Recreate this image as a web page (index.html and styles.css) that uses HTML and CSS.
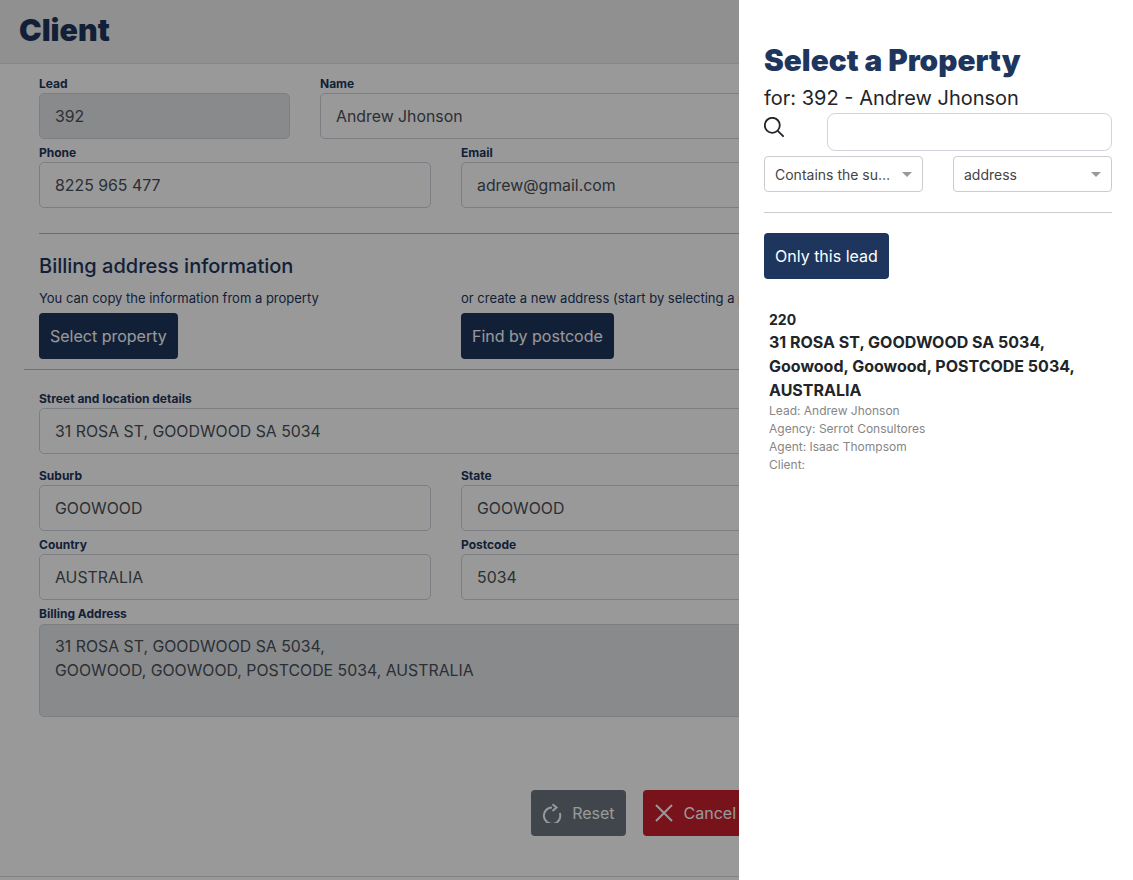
FILE: index.html
```html
<!DOCTYPE html>
<html lang="en">
<head>
<meta charset="UTF-8">
<title>Client</title>
<link rel="stylesheet" href="styles.css">
</head>
<body>
<div class="page">
    <header class="topbar"><h1 class="titolo">Client</h1></header>
    <form class="form">
        <div class="row row-lead">
            <div class="field"><label>Lead</label><input class="input" type="text" value="392" disabled></div>
            <div class="field"><label>Name</label><input class="input" type="text" value="Andrew Jhonson"></div>
        </div>
        <div class="row row-half">
            <div class="field"><label>Phone</label><input class="input" type="text" value="8225 965 477"></div>
            <div class="field"><label>Email</label><input class="input" type="text" value="adrew@gmail.com"></div>
        </div>
        <hr class="line">
        <h3 class="subtitle">Billing address information</h3>
        <div class="row row-half">
            <div>
                <p class="hint">You can copy the information from a property</p>
                <button type="button" class="btn btn-navy">Select property</button>
            </div>
            <div>
                <p class="hint nowrap">or create a new address (start by selecting a postcode)</p>
                <button type="button" class="btn btn-navy">Find by postcode</button>
            </div>
        </div>
        <hr class="line line-wide">
        <div class="field field-street"><label>Street and location details</label><input class="input" type="text" value="31 ROSA ST, GOODWOOD SA 5034"></div>
        <div class="row row-half">
            <div class="field"><label>Suburb</label><input class="input" type="text" value="GOOWOOD"></div>
            <div class="field"><label>State</label><input class="input" type="text" value="GOOWOOD"></div>
        </div>
        <div class="row row-half">
            <div class="field"><label>Country</label><input class="input" type="text" value="AUSTRALIA"></div>
            <div class="field"><label>Postcode</label><input class="input" type="text" value="5034"></div>
        </div>
        <div class="field field-billing"><label>Billing Address</label><textarea class="input area" disabled>31 ROSA ST, GOODWOOD SA 5034,
GOOWOOD, GOOWOOD, POSTCODE 5034, AUSTRALIA</textarea></div>
        <div class="actions">
            <button type="button" class="btn btn-grey">
                <svg class="ico" viewBox="0 0 20 20" fill="none" stroke="currentColor" stroke-width="2"><path d="M10 4.500A8.200 8.200 0 1 0 17.800 10"/><path d="M10.500 1.200L14.500 4.500L10.500 8"/></svg>
                Reset
            </button>
            <button type="button" class="btn btn-red">
                <svg class="ico" viewBox="0 0 20 20" fill="none" stroke="currentColor" stroke-width="2"><path d="M2 2l16 16M18 2L2 18"/></svg>
                Cancel
            </button>
        </div>
    </form>
    <div class="bottomline"></div>
</div>

<div class="overlay"></div>

<aside class="panel">
    <h2 class="panel-title">Select a Property</h2>
    <p class="panel-for">for: 392 - Andrew Jhonson</p>
    <div class="search">
        <svg class="search-ico" viewBox="0 0 20 20" fill="none" stroke="#212529" stroke-width="1.800"><circle cx="8.300" cy="8.300" r="7.500"/><path d="M13.800 13.800L19.700 19.700"/></svg>
        <input class="search-input" type="text">
    </div>
    <div class="filters">
        <div class="select"><span class="select-text">Contains the su…</span></div>
        <div class="select"><span class="select-text">address</span></div>
    </div>
    <hr class="panel-line">
    <button type="button" class="btn btn-navy">Only this lead</button>
    <div class="result">
        <div class="result-id">220</div>
        <div class="result-name">31 ROSA ST, GOODWOOD SA 5034, Goowood, Goowood, POSTCODE 5034, AUSTRALIA</div>
        <div class="result-info">Lead: Andrew Jhonson</div>
        <div class="result-info">Agency: Serrot Consultores</div>
        <div class="result-info">Agent: Isaac Thompsom</div>
        <div class="result-info">Client:</div>
    </div>
</aside>
</body>
</html>
```

FILE: styles.css
```css
html, body {margin: 0; height: 880px; overflow: hidden;}
body {font-family: Inter, "Liberation Sans", sans-serif; font-size: 16px; color: #212529; background: #FFFFFF;}
* {box-sizing: border-box;}

.page {width: 1133px; height: 880px; position: relative;}
.topbar {height: 64px; background: #F0F0F0; border-bottom: 1px solid #E2E2E2; padding: 9px 19px 0;}
.titolo {margin: 0; font-size: 30.300px; line-height: 42px; font-weight: 900; color: #1E365D;}

.form {width: 844px; margin-left: 24px; padding: 11px 15px 0;}
.row {display: grid; column-gap: 30px;}
.row-lead {grid-template-columns: 251px 503px; }
.row-half {grid-template-columns: 392px 392px;}
.field {margin-bottom: 5px;}
.field label {display: block; font-size: 12px; line-height: 18px; font-weight: 700; color: #1E365D;}
.field-billing label {padding-bottom: 1px;}
.input {display: block; width: 100%; height: 46px; padding: 0 15px; border: 1px solid #CED4DA; border-radius: 5px; background: #FFFFFF; font-family: inherit; font-size: 15.850px; color: #495057;}
.input:disabled {background: #E4E6E9; opacity: 1;}
.area {height: 93px; padding: 10px 15px; line-height: 24px; resize: none; overflow: hidden; width: 814px;}
.field-street {margin-bottom: 13px;}
.field-street .input {width: 814px;}

.line {margin: 20px 0 0; border: 0; border-top: 1px solid #B4B4B4;}
.line-wide {margin: 10px -15px 0; border-top-color: #BDBDBD;}
.line-wide + .field {margin-top: 20px;}
.subtitle {margin: 19px 0 0; font-size: 20px; line-height: 26px; font-weight: 500; color: #1E365D;}
.hint {margin: 11px 0 7px; font-size: 13px; line-height: 16px; color: #1E365D;}
.nowrap {white-space: nowrap;}

.btn {display: inline-flex; align-items: center; height: 46px; padding: 0 11px; border: 0; border-radius: 4px; font-family: inherit; font-size: 16px; color: #FFFFFF;}
.btn-navy {background: #1E365D;}
.btn-grey {background: #6C757D;}
.btn-red {background: #C8202F;}
.ico {width: 20px; height: 20px; margin-right: 10px;}
.actions {display: flex; justify-content: flex-end; gap: 17px; margin-top: 73px; padding-right: 106px;}
.bottomline {position: absolute; left: 0; right: 0; top: 876px; border-top: 1px solid #DADADA;}

.overlay {position: fixed; top: 0; left: 0; right: 0; bottom: 0; background: rgba(0, 0, 0, 0.4);}

.panel {position: fixed; top: 0; right: 0; bottom: 0; width: 394px; padding: 40px 21px 0 25px; background: #FFFFFF;}
.panel-title {margin: 0; font-size: 29.750px; line-height: 40px; font-weight: 900; color: #1E365D;}
.panel-for {margin: 6px 0 0; font-size: 20px; line-height: 24px; color: #212529;}
.search {display: flex; align-items: flex-start; justify-content: space-between; margin-top: 3px;}
.search-ico {width: 20px; height: 20px; margin-top: 4px;}
.search-input {width: 285px; height: 38px; border: 1px solid #CED4DA; border-radius: 8px; background: #FFFFFF;}
.filters {display: flex; justify-content: space-between; margin-top: 5px;}
.select {position: relative; width: 159px; height: 36px; padding: 1px 28px 0 10px; border: 1px solid #CCCCCC; border-radius: 4px; font-size: 14px; line-height: 34px; color: #444444;}
.select:after {content: ""; position: absolute; right: 10px; top: 15px; border-style: solid; border-width: 5px 5px 0; border-color: #999999 transparent transparent;}
.select-text {display: block; white-space: nowrap;}
.panel-line {margin: 20px 0; border: 0; border-top: 1px solid #CCCCCC;}
.result {padding: 28px 5px 0;}
.result-id {padding-top: 2px; font-size: 14px; line-height: 21px; font-weight: 700;}
.result-name {font-size: 16px; line-height: 24px; font-weight: 700; color: #212529;}
.result-info {font-size: 12px; line-height: 18px; color: #868686;}
```
